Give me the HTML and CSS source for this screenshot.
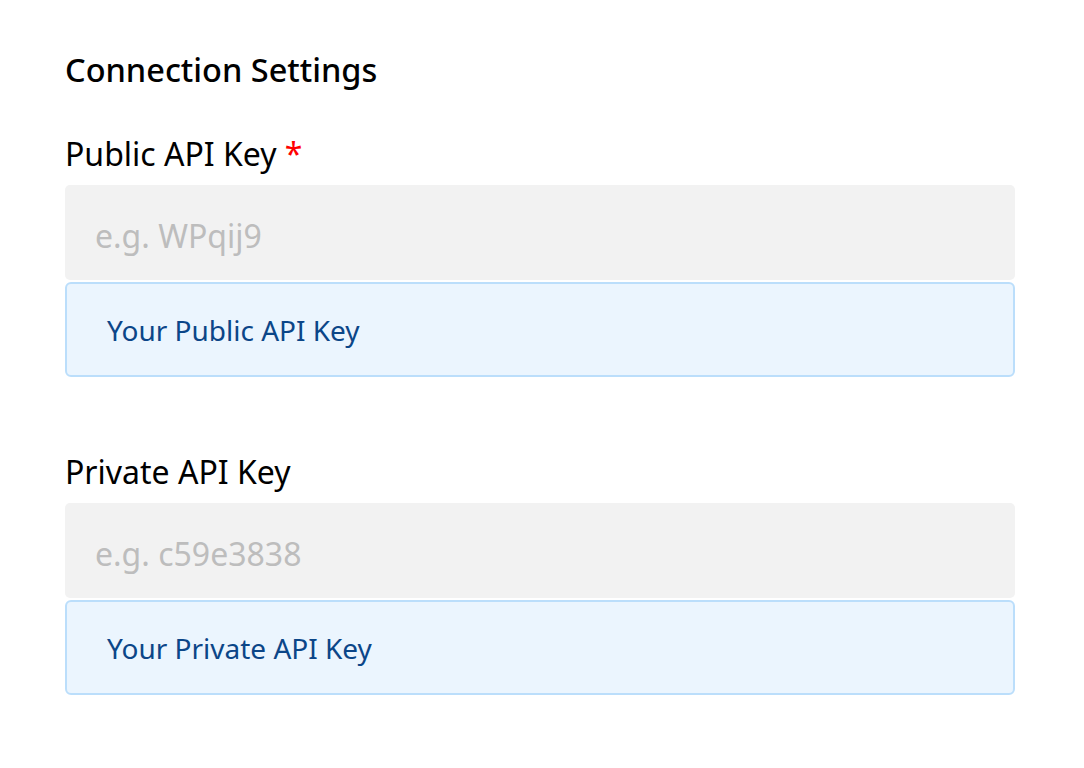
FILE: index.html
```html
<!DOCTYPE html>
<html>
<head>
<meta charset="utf-8">
<link rel="stylesheet" href="styles.css">
</head>
<body>
<div class="page">
  <h2 class="title">Connection Settings</h2>
  <div class="field">
    <label class="label">Public API Key <span class="req">*</span></label>
    <input class="input" type="text" placeholder="e.g. WPqij9">
    <div class="hint">Your Public API Key</div>
  </div>
  <div class="field">
    <label class="label">Private API Key</label>
    <input class="input" type="text" placeholder="e.g. c59e3838">
    <div class="hint">Your Private API Key</div>
  </div>
</div>
</body>
</html>
```
FILE: styles.css
```css
html, body {
  margin: 0;
  padding: 0;
  background: #ffffff;
}
body {
  font-family: "Noto Sans", "Open Sans", sans-serif;
  color: #000;
}
.page {
  width: 950px;
  padding: 48px 0 0 65px;
}
.title {
  margin: 0 0 40px 0;
  font-size: 32.5px;
  font-weight: 500;
  line-height: 44px;
}
.field {
  display: flex;
  flex-direction: column;
  margin-bottom: 73px;
}
.label {
  font-size: 32px;
  line-height: 44px;
  margin-bottom: 9px;
}
.req {
  color: #ff0000;
}
.input {
  box-sizing: border-box;
  height: 95px;
  border: none;
  border-radius: 5px;
  background: #f2f2f2;
  padding: 5px 30px 0 30px;
  font-family: inherit;
  font-size: 32px;
  color: #000;
  outline: none;
}
.input::placeholder {
  color: #bdbdbd;
}
.hint {
  box-sizing: border-box;
  margin-top: 2px;
  height: 95px;
  border: 2px solid #bbdefb;
  border-radius: 6px;
  background: #ebf5fe;
  padding: 0 40px;
  display: flex;
  align-items: center;
  font-size: 28px;
  color: #0b4688;
}
```
